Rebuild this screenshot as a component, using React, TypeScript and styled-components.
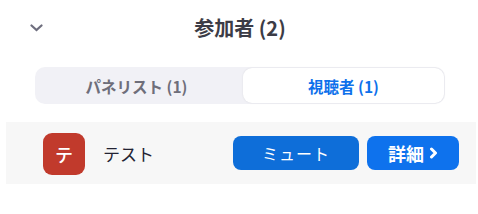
import React, { useState } from 'react';
import styled, { createGlobalStyle } from 'styled-components';

// Global reset for the page
const GlobalStyle = createGlobalStyle`
  body {
    margin: 0;
    background: #ffffff;
    font-family: "Noto Sans CJK JP", "Noto Sans", sans-serif;
  }
`;

const Panel = styled.div`
  width: 478px;
  height: 214px;
  display: flex;
  flex-direction: column;
`;

const Header = styled.div`
  position: relative;
  height: 55px;
  display: flex;
  align-items: center;
  justify-content: center;
`;

const Collapse = styled.button`
  position: absolute;
  left: 28px;
  top: 19px;
  width: 16px;
  height: 18px;
  padding: 0;
  border: none;
  background: none;
  display: flex;
  align-items: center;
  justify-content: center;
  cursor: pointer;
`;

const Title = styled.h1`
  margin: 0 0 0 2px;
  font-size: 20px;
  font-weight: 700;
  color: #3c3c46;
`;

const Segments = styled.div`
  margin: 12px 33px 0 35px;
  height: 37px;
  box-sizing: border-box;
  padding: 1px;
  border-radius: 10px;
  background: #f1f1f6;
  display: flex;
`;

const Segment = styled.button<{ $active?: boolean }>`
  flex: 1;
  border: none;
  border-radius: 9px;
  margin-left: ${(p) => (p.$active ? '6px' : '0')};
  background: ${(p) => (p.$active ? '#ffffff' : 'transparent')};
  box-shadow: ${(p) => (p.$active ? '0 0 2px rgba(0,0,0,0.10)' : 'none')};
  color: ${(p) => (p.$active ? '#0e71eb' : '#6e6e7a')};
  font-family: inherit;
  font-size: 15.5px;
  font-weight: 700;
  cursor: pointer;
`;

const Row = styled.div`
  margin: 18px 2px 0 6px;
  height: 62px;
  background: #f7f7f7;
  display: flex;
  align-items: center;
  padding: 0 17px 0 37px;
`;

const Avatar = styled.div`
  width: 42px;
  height: 42px;
  border-radius: 9px;
  background: #c13a2c;
  color: #ffffff;
  font-size: 18px;
  font-weight: 500;
  display: flex;
  align-items: center;
  justify-content: center;
  margin-top: 1px;
`;

const Name = styled.span`
  margin-left: 18px;
  font-size: 17px;
  color: #232333;
  flex: 1;
`;

const ActionButton = styled.button<{ $width: number; $tone: string; $bold?: boolean }>`
  width: ${(p) => p.$width}px;
  height: 34px;
  border: none;
  border-radius: 8px;
  background: ${(p) => p.$tone};
  color: #ffffff;
  font-family: inherit;
  font-size: ${(p) => (p.$bold ? '18px' : '16px')};
  font-weight: ${(p) => (p.$bold ? 700 : 400)};
  letter-spacing: ${(p) => (p.$bold ? '0' : '1px')};
  display: flex;
  align-items: center;
  justify-content: center;
  gap: 5px;
  cursor: pointer;
  & + & {
    margin-left: 8px;
  }
`;

const App: React.FC = () => {
  const [tab, setTab] = useState<'panelist' | 'attendee'>('attendee');

  return (
    <Panel>
      <GlobalStyle />
      <Header>
        <Collapse aria-label="collapse">
          <svg width="13" height="8" viewBox="0 0 13 8">
            <path d="M1.5 1.5 L6.5 6 L11.5 1.5" fill="none" stroke="#6e6e7e" strokeWidth="2.2" strokeLinecap="round" />
          </svg>
        </Collapse>
        <Title>参加者 (2)</Title>
      </Header>
      <Segments>
        <Segment $active={tab === 'panelist'} onClick={() => setTab('panelist')}>
          パネリスト (1)
        </Segment>
        <Segment $active={tab === 'attendee'} onClick={() => setTab('attendee')}>
          視聴者 (1)
        </Segment>
      </Segments>
      <Row>
        <Avatar>テ</Avatar>
        <Name>テスト</Name>
        <ActionButton $width={126} $tone="#0e6ed9">
          ミュート
        </ActionButton>
        <ActionButton $width={92} $tone="#0e72ed" $bold>
          詳細
          <svg width="9" height="12" viewBox="0 0 9 12">
            <path d="M2.5 2 L6.5 6 L2.5 10" fill="none" stroke="#ffffff" strokeWidth="3" strokeLinecap="round" strokeLinejoin="round" />
          </svg>
        </ActionButton>
      </Row>
    </Panel>
  );
};

export default App;
